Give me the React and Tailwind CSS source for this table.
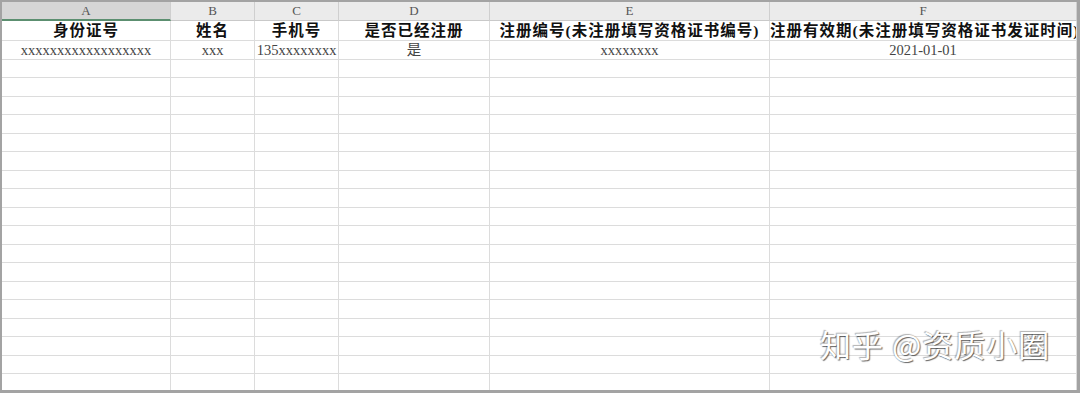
import React from "react";

const cols = [
  { key: "A", w: "w-[169px]", head: "身份证号", val: "xxxxxxxxxxxxxxxxxx" },
  { key: "B", w: "w-[84px]", head: "姓名", val: "xxx" },
  { key: "C", w: "w-[84px]", head: "手机号", val: "135xxxxxxxx" },
  { key: "D", w: "w-[151px]", head: "是否已经注册", val: "是" },
  { key: "E", w: "w-[280px]", head: "注册编号(未注册填写资格证书编号)", val: "xxxxxxxx" },
  { key: "F", w: "w-[307px]", head: "注册有效期(未注册填写资格证书发证时间)", val: "2021-01-01", left: true },
];

const serif = "font-['Liberation_Serif','Noto_Sans_CJK_SC',serif]";

export default function App() {
  const emptyRows = Array.from({ length: 19 });
  return (
    <div className="relative w-[1080px] h-[393px] overflow-hidden bg-white border-t-2 border-l-2 border-r-[3px] border-b-[3px] border-[#a3a3a3]">
      {/* column header */}
      <div className="flex h-[19px]">
        {cols.map((c, i) => (
          <div
            key={c.key}
            className={`${c.w} shrink-0 flex items-center justify-center text-[13px] text-[#555] ${serif} border-r border-[#cfcfcf] ${
              i === 0 ? "bg-[#d6d6d6] border-b-2 border-b-[#5c8f70]" : "bg-[#ebebeb] border-b border-b-[#c9c9c9]"
            }`}
          >
            {c.key}
          </div>
        ))}
      </div>
      {/* title row */}
      <div className="flex h-[20px] border-b border-[#dcdcdc]">
        {cols.map((c) => (
          <div
            key={c.key}
            className={`${c.w} shrink-0 flex items-center ${c.left ? "justify-start" : "justify-center"} overflow-hidden whitespace-nowrap border-r border-[#dcdcdc] text-[15.5px] leading-none font-bold text-[#111] tracking-[1px] font-['Liberation_Serif','Noto_Sans_CJK_SC',serif]`}
          >
            {c.head}
          </div>
        ))}
      </div>
      {/* data row */}
      <div className="flex h-[18.5px] border-b border-[#dcdcdc]">
        {cols.map((c) => (
          <div
            key={c.key}
            className={`${c.w} shrink-0 flex items-center justify-center overflow-hidden whitespace-nowrap border-r border-[#dcdcdc] text-[14.5px] leading-none text-[#444] ${serif}`}
          >
            {c.val}
          </div>
        ))}
      </div>
      {/* empty rows */}
      {emptyRows.map((_, r) => (
        <div key={r} className="flex h-[18.5px] border-b border-[#dcdcdc]">
          {cols.map((c) => (
            <div key={c.key} className={`${c.w} shrink-0 border-r border-[#dcdcdc]`} />
          ))}
        </div>
      ))}
      {/* watermark */}
      <div className="absolute left-[818px] top-[326px] text-[31px] leading-none text-white tracking-[1px] font-['Noto_Sans_CJK_SC',sans-serif] [text-shadow:1px_1px_1px_rgba(0,0,0,0.6),-1px_-1px_1px_rgba(0,0,0,0.3)] whitespace-nowrap">
        知乎 @资质小圈
      </div>
    </div>
  );
}
